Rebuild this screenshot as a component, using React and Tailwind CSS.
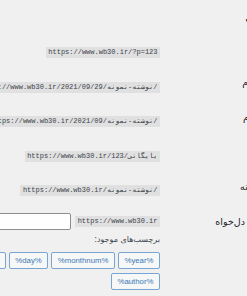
import React from 'react';

const rows = [
  { label: 'ساده', code: 'https://www.wb30.ir/?p=123' },
  { label: 'روز و نام', code: 'https://www.wb30.ir/2021/09/29/نوشته-نمونه/' },
  { label: 'ماه و نام', code: 'https://www.wb30.ir/2021/09/نوشته-نمونه/' },
  { label: 'عددی', code: 'https://www.wb30.ir/بایگانی/123' },
  { label: 'نام نوشته', code: 'https://www.wb30.ir/نوشته-نمونه/' },
];

const tags = ['%year%', '%monthnum%', '%day%', '%hour%', '%minute%', '%second%', '%post_id%', '%postname%', '%category%', '%author%'];

const Code = ({ children }) => (
  <code
    dir="ltr"
    className="inline-block whitespace-nowrap bg-[#e0e0e1] px-[2.5px] h-[11px] leading-[11px] text-[7px] text-[#3c434a] font-['Liberation_Mono','DejaVu_Sans_Mono',monospace]"
  >
    {children}
  </code>
);

const Radio = () => (
  <span className="w-[8px] h-[8px] rounded-full border border-[#8c8f94] bg-white shrink-0" />
);

export default function App() {
  return (
    <div className="w-[247px] h-[296px] overflow-hidden bg-[#f0f0f1]">
      <div dir="rtl" className="w-[700px] -ml-[340px] text-[#1d2327] font-['DejaVu_Sans','Liberation_Sans',sans-serif]">
        <p className="-mt-[9px] h-[10px] leading-[10px] text-[7px] text-[#50575e] whitespace-nowrap pr-[54px]">
          برای اطلاعات بیشتر درباره ساختار پیوندها{' '}
          <a className="text-[#2271b1] underline">مستندات ساختار پیوندهای یکتا را بخوانید</a>
        </p>

        <h2 className="mt-[10px] h-[14px] leading-[14px] text-[9px] font-bold pr-[41px]">تنظیمات عمومی</h2>

        <div className="mt-[6.75px]">
          {rows.map((r) => (
            <div key={r.label} className="flex h-[34.5px] items-center gap-[6px]">
              <div className="w-[194px] flex items-center gap-[4px] text-[9.5px] whitespace-nowrap pr-[70px]">
                <Radio />
                <span>{r.label}</span>
              </div>
              <div className="w-[500px] whitespace-nowrap">
                <Code>{r.code}</Code>
              </div>
            </div>
          ))}

          <div className="flex gap-[6px] items-start">
            <div className="w-[194px] flex items-center gap-[4px] text-[9.5px] whitespace-nowrap pr-[73px] pt-[8.75px] h-[26px]">
              <Radio />
              <span>ساختار دل‌خواه</span>
            </div>
            <div className="w-[500px] pt-[8.75px]">
              <div className="flex items-center gap-[4px] h-[17px]">
                <Code>https://www.wb30.ir</Code>
                <input
                  dir="ltr"
                  className="flex-1 h-[17px] bg-white border border-[#8c8f94] rounded-[2px] text-[7px] outline-none"
                  defaultValue=""
                />
              </div>
              <p className="mt-[5px] h-[10px] leading-[10px] text-[8px] text-[#3c434a]">برچسب‌های موجود:</p>
              <div className="mt-[7px] flex flex-wrap gap-x-[3px] gap-y-[4px]">
                {tags.map((t) => (
                  <button
                    key={t}
                    dir="ltr"
                    className="h-[17px] px-[5.5px] rounded-[2px] border border-[#7aa4d2] bg-[#f6f7f7] text-[#3d78b6] text-[7.8px] leading-[15px] font-['Liberation_Sans',sans-serif]"
                  >
                    {t}
                  </button>
                ))}
              </div>
            </div>
          </div>
        </div>
      </div>
    </div>
  );
}
